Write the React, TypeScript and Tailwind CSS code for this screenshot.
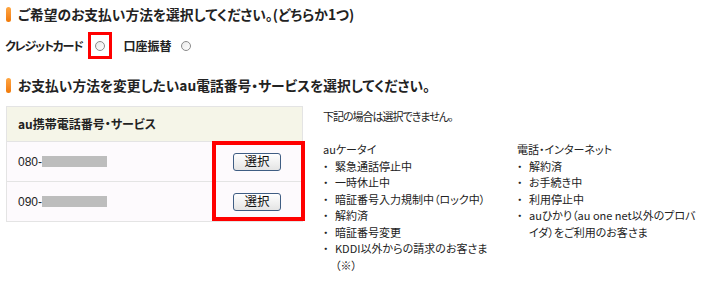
import React from "react";

const jp = "font-['Noto_Sans_CJK_JP','Noto_Sans',sans-serif] [font-feature-settings:'palt']";

function Heading({ children }: { children: React.ReactNode }) {
	return (
		<div className="flex items-center h-[15px] pl-[6px]">
			<span className="w-[5px] h-[15px] rounded-[3px] bg-gradient-to-b from-[#ffa640] to-[#f07800]" />
			<span className="ml-[7px] text-[13.75px] font-bold text-[#222] leading-none whitespace-nowrap">
				{children}
			</span>
		</div>
	);
}

function Radio() {
	return (
		<span className="inline-block w-[10px] h-[10px] rounded-full border border-[#8a8a8a] bg-gradient-to-br from-[#e8e8e8] to-white" />
	);
}

function PhoneRow({ prefix }: { prefix: string }) {
	return (
		<div className="flex items-center h-[40px] border-t border-[#e4e4e4] bg-[#fdfafd] pl-[11px] pr-[21px]">
			<span className="font-['Liberation_Sans',sans-serif] text-[12px] text-[#222]">{prefix}</span>
			<span className="w-[65px] h-[11px] bg-[#bdbdbd]" />
			<button className="ml-auto w-[48px] h-[18px] rounded-[3px] border border-[#3f5d83] bg-gradient-to-b from-white to-[#e4e4e4] text-[12.5px] leading-none text-[#111]">
				選択
			</button>
		</div>
	);
}

function Item({ children }: { children: React.ReactNode }) {
	return (
		<div className="flex">
			<span className="w-[12px] shrink-0">・</span>
			<span className="whitespace-nowrap">{children}</span>
		</div>
	);
}

export default function App() {
	return (
		<div className={`w-[720px] h-[291px] overflow-hidden bg-white text-[#222] ${jp}`}>
			<div className="pt-[7px]">
				<Heading>ご希望のお支払い方法を選択してください。(どちらか1つ)</Heading>
			</div>

			<div className="flex items-center h-[27px] mt-[10px] pl-[5px] text-[12px] font-bold">
				<span className="tracking-[-1.2px]">クレジットカード</span>
				<span className="ml-[5px] w-[24px] h-[27px] border-[3px] border-[#ff0000] flex items-center justify-center">
					<Radio />
				</span>
				<span className="ml-[12px]">口座振替</span>
				<span className="ml-[9px] flex">
					<Radio />
				</span>
			</div>

			<div className="mt-[19px]">
				<Heading>お支払い方法を変更したいau電話番号・サービスを選択してください。</Heading>
			</div>

			<div className="flex mt-[13px] pl-[6px]">
				<div className="relative w-[297px] shrink-0">
					<div className="border border-[#e4e4e4]">
						<div className="flex items-center h-[34px] bg-[#f5f5e8] pl-[11px] text-[12px] font-bold">
							au携帯電話番号・サービス
						</div>
						<PhoneRow prefix="080-" />
						<PhoneRow prefix="090-" />
					</div>
					<div className="absolute left-[206px] top-[35px] w-[93px] h-[80px] border-[4px] border-[#ff0000]" />
				</div>

				<div className="ml-[20px] pt-[2px] text-[11px] leading-[16.5px] text-[#222]">
					<div className="tracking-[-1px]">下記の場合は選択できません。</div>
					<div className="flex mt-[16.5px]">
						<div className="w-[194px] shrink-0">
							<div>auケータイ</div>
							<Item>緊急通話停止中</Item>
							<Item>一時休止中</Item>
							<Item>暗証番号入力規制中（ロック中）</Item>
							<Item>解約済</Item>
							<Item>暗証番号変更</Item>
							<Item>
								KDDI以外からの請求のお客さま
								<br />
								（※）
							</Item>
						</div>
						<div>
							<div>電話・インターネット</div>
							<Item>解約済</Item>
							<Item>お手続き中</Item>
							<Item>利用停止中</Item>
							<Item>
								auひかり（au one net以外のプロバ
								<br />
								イダ）をご利用のお客さま
							</Item>
						</div>
					</div>
				</div>
			</div>
		</div>
	);
}
